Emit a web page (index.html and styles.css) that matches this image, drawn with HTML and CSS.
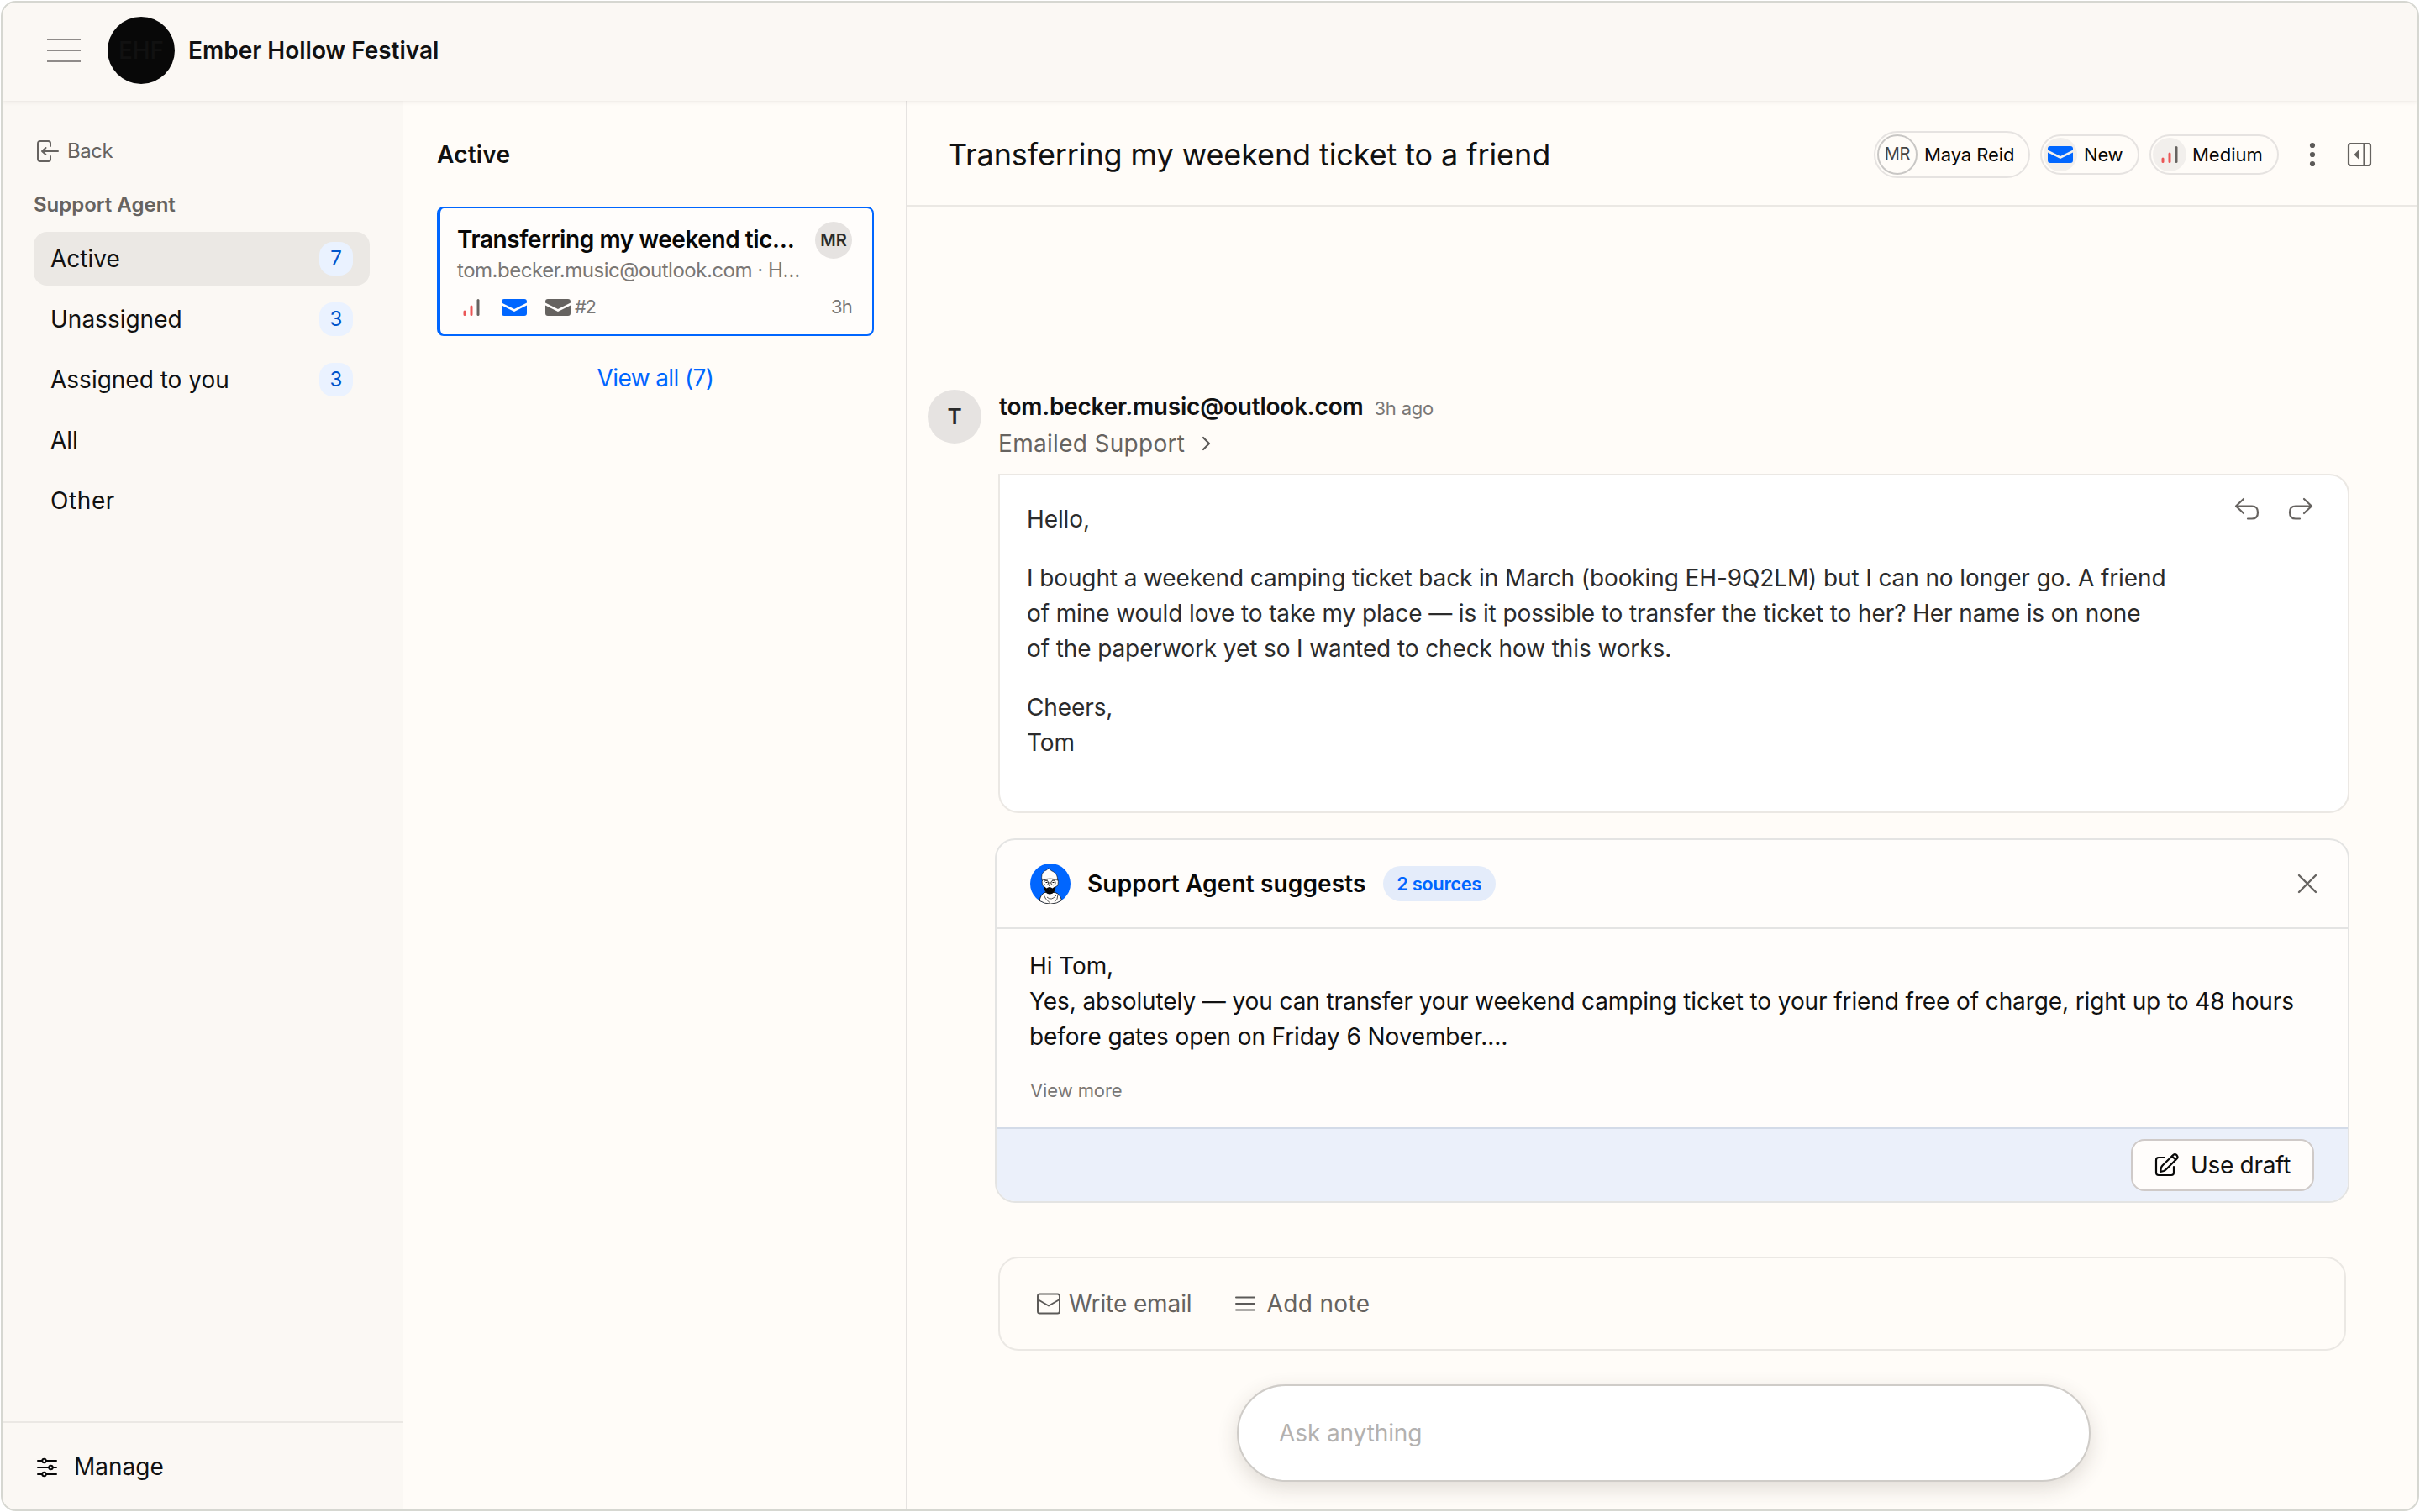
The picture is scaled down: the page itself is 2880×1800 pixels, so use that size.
FILE: index.html
```html
<!DOCTYPE html>
<html lang="en">
<head>
  <meta charset="UTF-8">
  <meta name="viewport" content="width=device-width, initial-scale=1.0">
  <title>Ember Hollow Festival - Support</title>
  <link rel="stylesheet" href="styles.css">
</head>
<body>
  <div class="app">
    <header class="topbar">
      <button class="menu-button" aria-label="Menu"><span></span><span></span><span></span></button>
      <div class="brand-logo">EHF</div>
      <div class="brand-name">Ember Hollow Festival</div>
    </header>

    <div class="columns">
      <nav class="sidebar">
        <a class="back">
          <svg width="28" height="28" viewBox="0 0 28 28" fill="none" stroke="#666360" stroke-width="2" stroke-linecap="round" stroke-linejoin="round">
            <path d="M17 8V4.500Q17 2 14.500 2H5Q2 2 2 5V23Q2 26 5 26H14.500Q17 26 17 23.500V20"/>
            <path d="M26 14H7M11.500 10L7 14L11.500 18"/>
          </svg>
          <span>Back</span>
        </a>
        <div class="sidebar-title">Support Agent</div>
        <ul class="nav-list">
          <li class="nav-item selected"><span>Active</span><span class="count">7</span></li>
          <li class="nav-item"><span>Unassigned</span><span class="count">3</span></li>
          <li class="nav-item"><span>Assigned to you</span><span class="count">3</span></li>
          <li class="nav-item"><span>All</span></li>
          <li class="nav-item"><span class="nav-other">Other</span></li>
        </ul>
        <div class="manage">
          <svg width="28" height="28" viewBox="0 0 28 28" fill="none" stroke="#080808" stroke-width="2" stroke-linecap="round">
            <path d="M3 6H8M13 6H25M3 14H16M21 14H25M3 22H8M13 22H25"/>
            <circle cx="10.500" cy="6" r="2.200"/>
            <circle cx="18.500" cy="14" r="2.200"/>
            <circle cx="10.500" cy="22" r="2.200"/>
          </svg>
          <span>Manage</span>
        </div>
      </nav>

      <section class="ticket-list">
        <h2>Active</h2>
        <div class="ticket">
          <div class="ticket-top">
            <div class="ticket-text">
              <div class="ticket-title">Transferring my weekend tic…</div>
              <div class="ticket-sub">tom.becker.music@outlook.com · H…</div>
            </div>
            <div class="avatar-small">MR</div>
          </div>
          <div class="ticket-meta">
            <svg class="meta-bars" width="20" height="20" viewBox="0 0 20 20" stroke-width="3" stroke-linecap="round">
              <path d="M2 15V18.500M10 9V18.500" stroke="#eb5757"/>
              <path d="M18 1.500V18.500" stroke="#666360"/>
            </svg>
            <svg class="meta-new" width="30" height="20" viewBox="0 0 30 20" fill="#0066ff">
              <path d="M0 4.500V3Q0 0 3 0H27Q30 0 30 3V4.500L15 12Z"/>
              <path d="M0 7.500L15 15L30 7.500V17Q30 20 27 20H3Q0 20 0 17Z"/>
            </svg>
            <svg width="30" height="20" viewBox="0 0 30 20" fill="#666360">
              <path d="M0 4.500V3Q0 0 3 0H27Q30 0 30 3V4.500L15 12Z"/>
              <path d="M0 7.500L15 15L30 7.500V17Q30 20 27 20H3Q0 20 0 17Z"/>
            </svg>
            <span class="ticket-number">#2</span>
            <span class="ticket-age">3h</span>
          </div>
        </div>
        <a class="view-all">View all (7)</a>
      </section>

      <main class="conversation">
        <div class="conversation-header">
          <h1>Transferring my weekend ticket to a friend</h1>
          <div class="pill pill-user">
            <span class="pill-avatar">MR</span>
            <span>Maya Reid</span>
          </div>
          <div class="pill pill-status">
            <span class="pill-icon">
              <svg width="30" height="20" viewBox="0 0 30 20" fill="#0066ff">
                <path d="M0 4.500V3Q0 0 3 0H27Q30 0 30 3V4.500L15 12Z"/>
                <path d="M0 7.500L15 15L30 7.500V17Q30 20 27 20H3Q0 20 0 17Z"/>
              </svg>
            </span>
            <span>New</span>
          </div>
          <div class="pill pill-priority">
            <span class="pill-icon">
              <svg width="20" height="20" viewBox="0 0 20 20" stroke-width="3" stroke-linecap="round">
                <path d="M2 15V18.500M10 9V18.500" stroke="#eb5757"/>
                <path d="M18 1.500V18.500" stroke="#666360"/>
              </svg>
            </span>
            <span>Medium</span>
          </div>
          <svg class="header-icon" width="32" height="32" viewBox="0 0 32 32" fill="#5c5a58">
            <circle cx="16" cy="5" r="3.100"/>
            <circle cx="16" cy="16" r="3.100"/>
            <circle cx="16" cy="27" r="3.100"/>
          </svg>
          <svg class="header-icon" width="32" height="32" viewBox="0 0 32 32" fill="none" stroke="#666360" stroke-width="2.200">
            <rect x="3" y="3" width="26" height="26" rx="2.500"/>
            <path d="M21.500 3V29"/>
            <path d="M15 10.500V21.500L9.500 16Z" fill="#666360" stroke="none"/>
          </svg>
        </div>

        <div class="message">
          <div class="message-avatar">T</div>
          <div class="message-main">
            <div class="message-from"><strong>tom.becker.music@outlook.com</strong><span class="message-age">3h ago</span></div>
            <div class="message-to">
              <span>Emailed Support</span>
              <svg width="16" height="20" viewBox="0 0 16 20" fill="none" stroke="#5c5a58" stroke-width="2.200" stroke-linecap="round" stroke-linejoin="round">
                <path d="M4 3L11 10L4 17"/>
              </svg>
            </div>
            <div class="message-card">
              <div class="message-body">
                <p>Hello,</p>
                <p><span class="line">I bought a weekend camping ticket back in March (booking EH-9Q2LM) but I can no longer go. A friend</span><br>
                  <span class="line">of mine would love to take my place — is it possible to transfer the ticket to her? Her name is on none</span><br>
                  <span class="line">of the paperwork yet so I wanted to check how this works.</span></p>
                <p>Cheers,<br>Tom</p>
              </div>
              <div class="message-actions">
                <svg width="32" height="32" viewBox="0 0 32 32" fill="none" stroke="#666360" stroke-width="2.200" stroke-linecap="round" stroke-linejoin="round">
                  <path d="M12 4L3 12.500L12 21M3 12.500H22Q29 12.500 29 20T22 27.500H17"/>
                </svg>
                <svg width="32" height="32" viewBox="0 0 32 32" fill="none" stroke="#666360" stroke-width="2.200" stroke-linecap="round" stroke-linejoin="round">
                  <path d="M20 4L29 12.500L20 21M29 12.500H10Q3 12.500 3 20T10 27.500H15"/>
                </svg>
              </div>
            </div>
          </div>
        </div>

        <div class="suggestion">
          <div class="suggestion-header">
            <svg class="agent-avatar" width="48" height="48" viewBox="0 0 48 48">
              <circle cx="24" cy="24" r="24" fill="#0066ff"/>
              <!-- robe -->
              <path d="M17 34.500Q12.500 37 11 44.300A24 24 0 0 0 37.500 43.900Q36 37 30 34.500Z" fill="#fffdfb" stroke="#080808" stroke-width=".8"/>
              <path d="M16 37Q18 43 23 46.500M20 40Q25 45 31 38M33 37Q33 43 29 46" fill="none" stroke="#080808" stroke-width=".7"/>
              <!-- face and turban -->
              <path d="M15 18Q13.500 21 14.500 26L17 28Q17 36 23 36Q29 36 30 28L33 26Q34 21 32.500 18Z" fill="#fffdfb" stroke="#080808" stroke-width=".7"/>
              <path d="M14 20Q12.500 12 17 9Q20 8 22 5.500Q24 8.500 28 10Q33 13 32.500 20Q24 16 14 20Z" fill="#fffdfb" stroke="#080808" stroke-width=".6"/>
              <g fill="none" stroke="#080808" stroke-width=".7">
                <circle cx="19" cy="23" r="2.700"/>
                <circle cx="27.500" cy="23" r="2.700"/>
                <path d="M21.700 23H24.800M17 19.500L21 20M26 20L30 19.500M23.500 23L22.500 27"/>
              </g>
              <path d="M18.500 22.500h2M26.500 22.500h2" stroke="#080808" stroke-width="1"/>
              <!-- beard -->
              <path d="M16.500 27L19.500 29.500Q23 26.500 26.500 29.500L30 27Q30 36 23.300 36.500Q17 36 16.500 27Z" fill="#080808"/>
              <path d="M21 31.500Q23.300 30 25.500 31.500Q23.300 32.500 21 31.500Z" fill="#fffdfb"/>
            </svg>
            <strong>Support Agent suggests</strong>
            <span class="sources">2 sources</span>
            <svg class="close" width="32" height="32" viewBox="0 0 32 32" fill="none" stroke="#666360" stroke-width="2.400" stroke-linecap="round">
              <path d="M6 6L26 26M26 6L6 26"/>
            </svg>
          </div>
          <div class="suggestion-body">
            <p>Hi Tom,<br>
              <span class="line">Yes, absolutely — you can transfer your weekend camping ticket to your friend free of charge, right up to 48 hours</span><br>
              before gates open on Friday 6 November.…</p>
            <a class="view-more">View more</a>
          </div>
          <div class="suggestion-footer">
            <button class="use-draft">
              <svg width="32" height="32" viewBox="0 0 32 32" fill="none" stroke="#080808" stroke-width="2.200" stroke-linecap="round" stroke-linejoin="round">
                <path d="M13 7H6Q3 7 3 10V25Q3 28 6 28H21Q24 28 24 25V18"/>
                <path d="M8 24L9 19Q9.500 17.500 10.500 16.500L23.500 3.800Q25.300 2.300 27.500 4.200Q29.400 6.300 27.800 8.300L15 21Q13.500 22.500 12 23Z"/>
                <path d="M22 5.500L26.300 9.700"/>
              </svg>
              <span>Use draft</span>
            </button>
          </div>
        </div>

        <div class="composer">
          <svg width="32" height="32" viewBox="0 0 32 32" fill="none" stroke="#5c5a58" stroke-width="2" stroke-linejoin="round">
            <rect x="3" y="4.500" width="26" height="23" rx="2.500"/>
            <path d="M3 11L16 18.500L29 11"/>
          </svg>
          <span class="write-email">Write email</span>
          <svg width="32" height="32" viewBox="0 0 32 32" fill="none" stroke="#5c5a58" stroke-width="2" stroke-linecap="round">
            <path d="M5 8.500H27M5 16H27M5 23.500H27"/>
          </svg>
          <span class="add-note">Add note</span>
        </div>

        <div class="ask-bar">Ask anything</div>
      </main>
    </div>
  </div>
</body>
</html>
```
FILE: styles.css
```css
* {
  box-sizing: border-box;
}
body {
  margin: 0;
  width: 2880px;
  height: 1800px;
  overflow: hidden;
  background-color: #fff;
  font-family: Inter, "Liberation Sans", sans-serif;
  font-size: 28px;
  line-height: 42px;
  color: #111;
}
h1, h2, p, ul {
  margin: 0;
  padding: 0;
}
button {
  font: inherit;
  color: inherit;
}
svg {
  display: block;
  flex-shrink: 0;
}
strong {
  font-weight: 600;
}
.app {
  display: flex;
  flex-direction: column;
  margin: 1px;
  height: 1798px;
  border: 2px solid #d6d7d1;
  border-radius: 18px;
  overflow: hidden;
  background-color: #fffcf8;
}

/* top bar */
.topbar {
  display: flex;
  align-items: center;
  height: 117px;
  padding: 0 0 3px 53px;
  background-color: #fbf8f4;
  box-shadow: 0 1px 5px rgba(60, 50, 40, 0.1);
  position: relative;
}
.menu-button {
  display: flex;
  flex-direction: column;
  gap: 11px;
  width: 40px;
  padding: 0;
  border: none;
  background: none;
}
.menu-button span {
  height: 2px;
  background-color: #8f8b89;
}
.brand-logo {
  display: flex;
  align-items: center;
  justify-content: center;
  width: 80px;
  height: 80px;
  margin-left: 32px;
  border-radius: 50%;
  background-color: #080808;
  color: #111;
  font-weight: 500;
}
.brand-name {
  margin-left: 16px;
  font-weight: 600;
}
.columns {
  display: flex;
  flex: 1;
}

/* sidebar */
.sidebar {
  display: flex;
  flex-direction: column;
  width: 477px;
  padding-top: 40px;
  background-color: #fbf8f4;
}
.back {
  display: flex;
  align-items: center;
  gap: 9px;
  height: 40px;
  padding-left: 40px;
  font-size: 24px;
  letter-spacing: -0.5px;
  color: #666360;
}
.sidebar-title {
  margin: 29px 0 17px 37px;
  font-size: 24px;
  font-weight: 600;
  line-height: 30px;
  color: #666360;
}
.nav-list {
  display: flex;
  flex-direction: column;
  gap: 8px;
  padding: 0 40px 0 37px;
  list-style: none;
}
.nav-item {
  display: flex;
  align-items: center;
  justify-content: space-between;
  height: 64px;
  padding: 0 20px;
  border-radius: 16px;
}
.nav-item.selected {
  background-color: #ebe8e4;
}
.nav-other {
  letter-spacing: 0.6px;
}
.count {
  width: 40px;
  height: 40px;
  border-radius: 16px;
  background-color: #eaf2ff;
  color: #0055cc;
  font-size: 24px;
  line-height: 39px;
  text-align: center;
}
.manage {
  display: flex;
  align-items: center;
  gap: 18px;
  height: 105px;
  margin-top: auto;
  padding: 3px 0 0 39px;
  border-top: 2px solid #ebe8e4;
}
.manage span {
  margin-top: -2px;
}

/* ticket list */
.ticket-list {
  width: 600px;
  padding: 44px 38px 0 40px;
  border-right: 2px solid #e6e3e1;
}
.ticket-list h2 {
  font-size: 28px;
  font-weight: 600;
  line-height: 40px;
  letter-spacing: 0.2px;
}
.ticket {
  width: 520px;
  height: 154px;
  margin-top: 42px;
  padding: 17px 24px 0 20px;
  border: 2px solid #0066ff;
  border-left-width: 4px;
  border-radius: 8px;
  background-color: #fffdfb;
}
.ticket-top {
  display: flex;
  justify-content: space-between;
}
.ticket-text {
  white-space: nowrap;
}
.ticket-title {
  font-weight: 600;
  line-height: 40px;
  letter-spacing: -0.42px;
  color: #080808;
}
.ticket-sub {
  font-size: 24px;
  line-height: 34px;
  letter-spacing: -0.47px;
  color: #7a7775;
}
.avatar-small {
  width: 44px;
  height: 44px;
  margin-top: -1px;
  border-radius: 50%;
  background-color: #e6e3e1;
  color: #2b2b2b;
  font-size: 20px;
  font-weight: 600;
  line-height: 45px;
  text-align: center;
}
.ticket-meta {
  display: flex;
  align-items: center;
  height: 28px;
  margin-top: 13px;
  color: #7a7775;
  font-size: 22px;
}
.ticket-meta span {
  margin-top: -2px;
}
.meta-bars {
  margin-left: 7px;
}
.meta-new {
  margin: 0 22px 0 26px;
}
.ticket-number {
  margin-left: 5px;
  letter-spacing: -1.4px;
}
.ticket-age {
  margin-left: auto;
  letter-spacing: -0.8px;
}
.view-all {
  display: block;
  margin-top: 30px;
  color: #0066ff;
  line-height: 40px;
  letter-spacing: -0.6px;
  text-align: center;
}

/* conversation */
.conversation {
  flex: 1;
}
.conversation-header {
  display: flex;
  align-items: center;
  height: 126px;
  padding: 4px 53px 0 48px;
  border-bottom: 2px solid #ebe8e4;
}
.conversation-header h1 {
  margin-right: auto;
  font-size: 36px;
  font-weight: 400;
  letter-spacing: -0.1px;
}
.pill {
  display: flex;
  align-items: center;
  height: 48px;
  margin-left: 12px;
  padding: 0 2px;
  border: 2px solid #e6e3e1;
  border-radius: 24px;
  color: #080808;
  font-size: 22px;
}
.pill-user {
  gap: 8px;
  width: 186px;
  height: 56px;
  border-radius: 28px;
  letter-spacing: -0.1px;
}
.pill-status {
  gap: 8px;
  width: 118px;
  letter-spacing: -0.2px;
}
.pill-priority {
  gap: 7px;
  width: 154px;
}
.pill-avatar {
  width: 48px;
  height: 48px;
  border: 2px solid #c9c7c5;
  border-radius: 50%;
  color: #444;
  font-size: 20px;
  line-height: 43px;
  text-align: center;
}
.pill-icon {
  display: flex;
  align-items: center;
  justify-content: center;
  width: 40px;
  height: 40px;
  border-radius: 50%;
  background-color: #f2efec;
}
.header-icon {
  margin-left: 24px;
}
.message {
  display: flex;
  gap: 20px;
  margin: 216px 0 0 24px;
}
.message-avatar {
  width: 64px;
  height: 64px;
  margin-top: 2px;
  border-radius: 50%;
  background-color: #e6e3e1;
  color: #2b2b2b;
  font-size: 26px;
  font-weight: 600;
  line-height: 64px;
  text-align: center;
}
.message-from {
  height: 43px;
  padding-left: 1px;
  line-height: 45px;
  letter-spacing: -0.22px;
}
.message-age {
  margin-left: 13px;
  color: #7a7775;
  font-size: 22px;
}
.message-to {
  display: flex;
  align-items: center;
  gap: 18px;
  height: 45px;
  margin-bottom: 14px;
  color: #666360;
}
.message-to span {
  letter-spacing: 0.3px;
}
.message-card {
  display: flex;
  justify-content: space-between;
  width: 1608px;
  height: 404px;
  padding: 24px 40px 0 32px;
  border: 2px solid #ebe8e4;
  border-radius: 0 24px 24px 24px;
  background-color: #fff;
}
.message-body {
  display: flex;
  flex-direction: column;
  gap: 28px;
  padding-top: 7px;
  color: #2b2b2b;
  letter-spacing: -0.11px;
}
.line {
  white-space: nowrap;
}
.message-actions {
  display: flex;
  gap: 32px;
}

/* suggested reply */
.suggestion {
  width: 1612px;
  height: 434px;
  margin: 30px 0 0 104px;
  border: 2px solid #e4e4e3;
  border-radius: 24px;
  overflow: hidden;
  background-color: #fffdfb;
}
.suggestion-header {
  display: flex;
  align-items: center;
  height: 106px;
  padding: 0 32px 0 40px;
  border-bottom: 2px solid #e4e4e3;
}
.agent-avatar {
  margin-right: 20px;
}
.suggestion-header strong {
  color: #080808;
  letter-spacing: 0.14px;
}
.sources {
  width: 134px;
  height: 42px;
  margin-left: 20px;
  border-radius: 21px;
  background-color: #e4ecfa;
  color: #0066ff;
  font-size: 22px;
  font-weight: 600;
  letter-spacing: -0.4px;
  text-align: center;
}
.close {
  margin-left: auto;
}
.suggestion-body {
  height: 236px;
  padding: 23px 0 0 39px;
  letter-spacing: -0.1px;
}
.view-more {
  display: block;
  margin-top: 27px;
  padding-left: 1px;
  color: #7a7775;
  font-size: 22px;
  line-height: 32px;
}
.suggestion-footer {
  display: flex;
  align-items: center;
  justify-content: flex-end;
  height: 88px;
  padding-right: 40px;
  border-top: 2px solid #d3dbe8;
  background-color: #ebf0fa;
}
.use-draft {
  display: flex;
  align-items: center;
  gap: 12px;
  width: 218px;
  height: 62px;
  padding: 0 0 0 25px;
  border: 2px solid #cfcac8;
  border-radius: 16px;
  background-color: #fffdfb;
  letter-spacing: -0.3px;
}

/* composer */
.composer {
  display: flex;
  align-items: center;
  width: 1604px;
  height: 112px;
  margin: 64px 0 0 108px;
  padding-left: 42px;
  border: 2px solid #ebe8e4;
  border-radius: 24px;
  color: #666360;
}
.write-email {
  margin: 0 47px 0 8px;
  letter-spacing: -0.1px;
}
.add-note {
  margin-left: 10px;
  letter-spacing: 0.35px;
}
.ask-bar {
  width: 1016px;
  height: 116px;
  margin: 40px 0 0 392px;
  padding-left: 48px;
  border: 2px solid #cfccc8;
  border-radius: 58px;
  background-color: #fff;
  box-shadow: 0 8px 24px rgba(60, 50, 40, 0.16);
  color: #b3b1af;
  line-height: 112px;
  letter-spacing: -0.1px;
}
```
